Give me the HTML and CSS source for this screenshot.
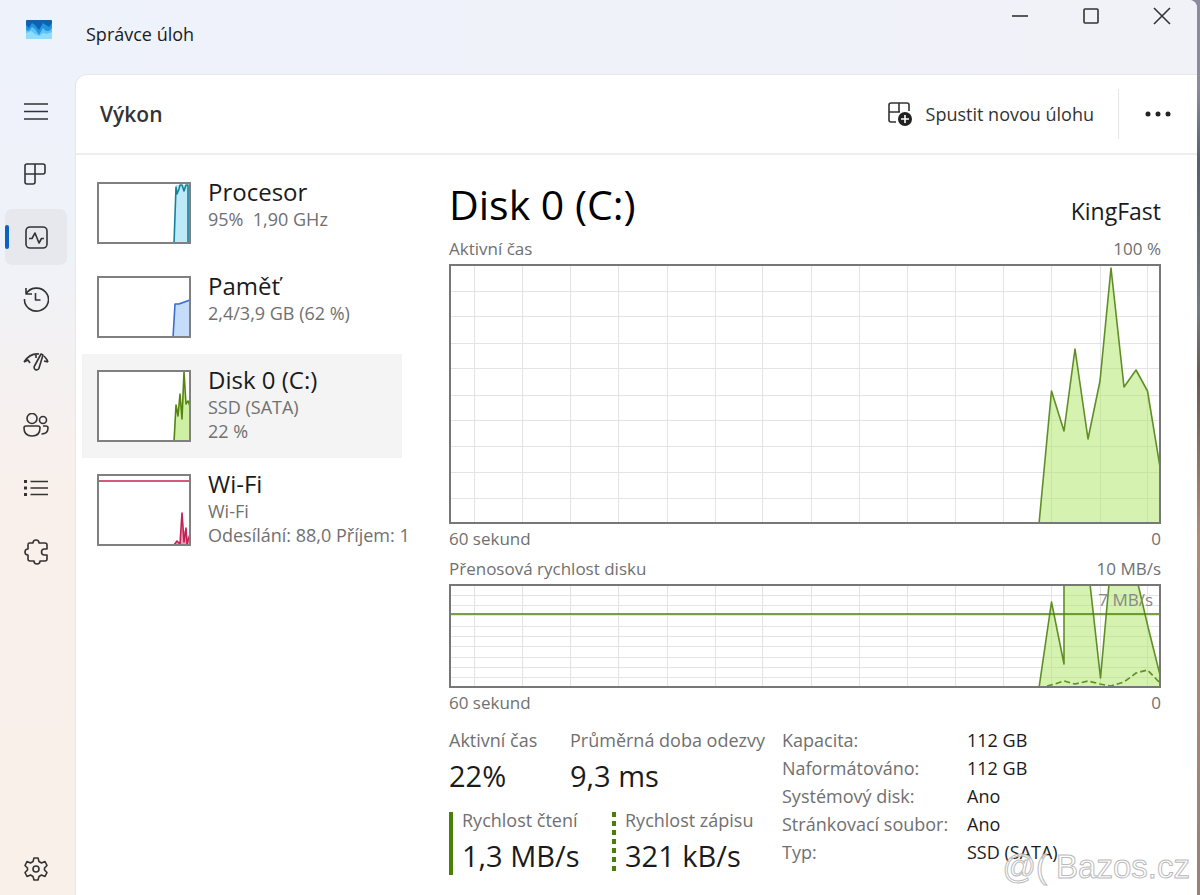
FILE: index.html
```html
<!DOCTYPE html>
<html lang="cs">
<head>
    <meta charset="UTF-8">
    <meta name="viewport" content="width=device-width, initial-scale=1.0">
    <title>Správce úloh</title>
    <link rel="stylesheet" href="styles.css">
</head>
<body>
    <div class="window">
        <header class="titlebar">
            <svg class="app-icon" viewBox="0 0 26 19">
                <rect width="26" height="19" rx="1" fill="#0f62ad"/>
                <path d="M0 5 L3 8 L6 3 L9 5 L13 10 L17 3 L20 5 L23 7 L26 3 V19 H0 Z" fill="#2496e0"/>
                <path d="M0 10 L3 11 L6 7 L9 9 L13 15 L17 8 L20 11 L23 11 L26 8 V19 H0 Z" fill="#5cc4f7"/>
                <path d="M0 13 L5 11 L9 14 L13 16 L17 13 L21 14 L26 12 V19 H0 Z" fill="#8fdcff"/>
            </svg>
            <span class="app-title">Správce úloh</span>
            <div class="window-controls">
                <button type="button" aria-label="Minimalizovat">
                    <svg viewBox="0 0 18 18"><path d="M1 9 H17"/></svg>
                </button>
                <button type="button" aria-label="Maximalizovat">
                    <svg viewBox="0 0 18 18"><rect x="2" y="2" width="14" height="14" rx="1"/></svg>
                </button>
                <button type="button" aria-label="Zavřít">
                    <svg viewBox="0 0 18 18"><path d="M1 1 L17 17 M17 1 L1 17"/></svg>
                </button>
            </div>
        </header>

        <nav class="rail">
            <button type="button" aria-label="Navigace">
                <svg viewBox="0 0 26 26"><path d="M1 6 H25 M1 13.500 H25 M1 21 H25"/></svg>
            </button>
            <button type="button" aria-label="Procesy">
                <svg viewBox="0 0 26 26"><path d="M4 3 H20 Q22 3 22 5 V11 Q22 13 20 13 H2 V5 Q2 3 4 3 Z M12 3 V21 Q12 23 10 23 H4 Q2 23 2 21 V13"/></svg>
            </button>
            <button type="button" class="active" aria-label="Výkon">
                <svg viewBox="0 0 26 26"><rect x="3" y="3" width="21" height="21" rx="4"/><path d="M6 14.500 H9 L12 9 L16 19 L18.500 14.500 H21"/></svg>
            </button>
            <button type="button" aria-label="Historie aplikací">
                <svg viewBox="0 0 26 26"><path d="M3 1 V7 H9 M3 7 A12 11.500 0 1 1 1.500 12 M12.500 6 V13 H17.500"/></svg>
            </button>
            <button type="button" aria-label="Aplikace po spuštění">
                <svg viewBox="0 0 26 26"><path d="M1 12 Q7 3 16 4 M21 6 Q24 9 25 12 M1 12 L5 10 L7 13 M13 4 V8 M25 12 L21 11 M18 4 L11.500 16 A2.500 2.500 0 1 0 16 18 L20 5 Z"/></svg>
            </button>
            <button type="button" aria-label="Uživatelé">
                <svg viewBox="0 0 26 26"><circle cx="9" cy="5.500" r="5"/><circle cx="20" cy="7" r="3.500"/><path d="M3 13 H15 Q17 13 17 15 Q17 23 9 23 Q1 23 1 15 Q1 13 3 13 Z M20 13 H23 Q25 13 25 15 Q25 21 18.500 21"/></svg>
            </button>
            <button type="button" aria-label="Podrobnosti">
                <svg viewBox="0 0 26 26"><path d="M7.500 5.500 H25 M7.500 12 H25 M7.500 18.500 H25"/><path d="M1 5.500 H4 M1 12 H4 M1 18.500 H4" stroke-width="3"/></svg>
            </button>
            <button type="button" aria-label="Služby">
                <svg viewBox="0 0 26 26"><path d="M6 4 H10 A3 3 0 0 1 16 4 H22 Q24 4 24 6 V10 H21.500 A3 3 0 0 0 21.500 16 H24 V20 Q24 22 22 22 H17 A3 3 0 0 1 11 22 H7 Q5 22 5 20 V16 A3 3 0 0 1 5 10 V6 Q5 4 6 4 Z"/></svg>
            </button>
            <button type="button" class="settings" aria-label="Nastavení">
                <svg viewBox="0 0 26 26"><path d="M11 2 H15 L16 5.500 L18.500 7 L22 5.500 L24 9.500 L21.500 12 V14 L24 16.500 L22 20.500 L18.500 19 L16 20.500 L15 24 H11 L10 20.500 L7.500 19 L4 20.500 L2 16.500 L4.500 14 V12 L2 9.500 L4 5.500 L7.500 7 L10 5.500 Z"/><circle cx="13" cy="13" r="3"/></svg>
            </button>
        </nav>

        <main class="page">
            <div class="toolbar">
                <h1>Výkon</h1>
                <button type="button" class="run-task">
                    <svg viewBox="0 0 26 26"><path d="M4 2 H20 Q22 2 22 4 V10 M12 2 V11 M2 11 H13 M9 21 H4 Q2 21 2 19 V4 Q2 2 4 2"/><circle class="dot" cx="18" cy="18" r="7"/><path class="plus" d="M14 18 H22 M18 14 V22"/></svg>
                    Spustit novou úlohu
                </button>
                <button type="button" class="more" aria-label="Další možnosti">
                    <svg viewBox="0 0 26 26"><circle cx="3" cy="13" r="2.500"/><circle cx="13" cy="13" r="2.500"/><circle cx="23" cy="13" r="2.500"/></svg>
                </button>
            </div>

            <div class="content">
                <div class="devices">
                    <button type="button" class="device">
                        <svg class="thumb cpu" viewBox="2 2 90 58">
                            <path class="fill" d="M77 62 L79 3 H92 V62 Z"/>
                            <path class="line" d="M77 62 L79 5 L80 12 L82 7 L83 3 H85 L87 9 L89 3 H91 V62"/>
                        </svg>
                        <span class="device-text">
                            <span class="device-name">Procesor</span>
                            <span>95%&nbsp; 1,90 GHz</span>
                        </span>
                    </button>
                    <button type="button" class="device">
                        <svg class="thumb memory" viewBox="2 2 90 58">
                            <path class="fill" d="M76 62 L78 28 L93 24 V62 Z"/>
                            <path class="line" d="M76 62 L78 28 L82 28 L93 24"/>
                        </svg>
                        <span class="device-text">
                            <span class="device-name">Paměť</span>
                            <span>2,4/3,9 GB (62 %)</span>
                        </span>
                    </button>
                    <button type="button" class="device selected">
                        <svg class="thumb disk tall" viewBox="2 2 90 68">
                            <path class="fill" d="M77 72 L79 35 L81 46 L83 24 L85 49 L87 2 L89 34 L92 34 L93 72 Z"/>
                            <path class="line" d="M77 72 L79 35 L81 46 L83 24 L85 49 L87 2 L89 34 L91 31 L93 36"/>
                        </svg>
                        <span class="device-text">
                            <span class="device-name">Disk 0 (C:)</span>
                            <span>SSD (SATA)</span>
                            <span>22 %</span>
                        </span>
                    </button>
                    <button type="button" class="device">
                        <svg class="thumb wifi tall" viewBox="2 2 90 68">
                            <path class="line" d="M0 7 H94"/>
                            <path class="fill" d="M77 72 L80 67 L83 69 L85 39 L87 58 L89 54 L91 68 L93 62 V72 Z"/>
                            <path class="line" d="M77 71 L80 67 L83 70 L85 39 L87 68 L89 54 L90 70 L93 60"/>
                        </svg>
                        <span class="device-text">
                            <span class="device-name">Wi-Fi</span>
                            <span>Wi-Fi</span>
                            <span>Odesílání: 88,0 Příjem: 1</span>
                        </span>
                    </button>
                </div>

                <section class="detail">
                    <div class="detail-head">
                        <h2>Disk 0 (C:)</h2>
                        <span class="model">KingFast</span>
                    </div>

                    <div class="scale"><span>Aktivní čas</span><span>100 %</span></div>
                    <svg class="graph active-time" viewBox="0 0 708 256" preserveAspectRatio="none">
                        <path class="grid" d="M23.500 0 V258 M71.500 0 V258 M119.500 0 V258 M167.500 0 V258 M216.500 0 V258 M264.500 0 V258 M311.500 0 V258 M360.500 0 V258 M408.500 0 V258 M456.500 0 V258 M504.500 0 V258 M552.500 0 V258 M600.500 0 V258 M649.500 0 V258 M696.500 0 V258"/>
                        <path class="grid" d="M0 25.500 H710 M0 50.500 H710 M0 77.500 H710 M0 102.500 H710 M0 129.500 H710 M0 154.500 H710 M0 180.500 H710 M0 206.500 H710 M0 232.500 H710"/>
                        <path class="fill" d="M588 258 L600.500 125 L613 165 L624 83 L637 173 L649 115 L660 2 L673 121 L685 104 L696.500 125 L709 201 V258 Z"/>
                        <path class="line" d="M588 258 L600.500 125 L613 165 L624 83 L637 173 L649 115 L660 2 L673 121 L685 104 L696.500 125 L709 201"/>
                    </svg>
                    <div class="scale"><span>60 sekund</span><span>0</span></div>

                    <div class="scale"><span>Přenosová rychlost disku</span><span>10 MB/s</span></div>
                    <div class="graph-wrap">
                        <svg class="graph transfer" viewBox="0 0 708 100" preserveAspectRatio="none">
                            <path class="grid" d="M23.500 0 V102 M71.500 0 V102 M119.500 0 V102 M167.500 0 V102 M216.500 0 V102 M264.500 0 V102 M311.500 0 V102 M360.500 0 V102 M408.500 0 V102 M456.500 0 V102 M504.500 0 V102 M552.500 0 V102 M600.500 0 V102 M649.500 0 V102 M696.500 0 V102"/>
                            <path class="grid" d="M0 9.500 H710 M0 19.500 H710 M0 29.500 H710 M0 40.500 H710 M0 50.500 H710 M0 60.500 H710 M0 71.500 H710 M0 81.500 H710 M0 91.500 H710"/>
                            <path class="fill" d="M588 102 L600.500 16 L613 78 V-2 H639 L649.500 92 L658 -2 H687 L709 89 V102 Z"/>
                            <path class="line" d="M588 102 L600.500 16 L613 78 V-2 H639 L649.500 92 L658 -2 H687 L697 41 L709 89"/>
                            <path class="line dashed" d="M596 100 L604 98 L613 95 L624 98 L637 95 L649 98 L660 100 L673 96 L685 87 L696.500 84 L709 97"/>
                            <path class="line limit" d="M0 28 H710"/>
                        </svg>
                        <span class="limit-label">7 MB/s</span>
                    </div>
                    <div class="scale"><span>60 sekund</span><span>0</span></div>

                    <div class="stats">
                        <div class="counters">
                            <div class="counter">
                                <span class="label">Aktivní čas</span>
                                <span class="value">22%</span>
                            </div>
                            <div class="counter">
                                <span class="label">Průměrná doba odezvy</span>
                                <span class="value">9,3 ms</span>
                            </div>
                        </div>
                        <div class="counters speeds">
                            <div class="counter read">
                                <span class="label">Rychlost čtení</span>
                                <span class="value">1,3 MB/s</span>
                            </div>
                            <div class="counter write">
                                <span class="label">Rychlost zápisu</span>
                                <span class="value">321 kB/s</span>
                            </div>
                        </div>
                        <dl class="facts">
                            <dt>Kapacita:</dt><dd>112 GB</dd>
                            <dt>Naformátováno:</dt><dd>112 GB</dd>
                            <dt>Systémový disk:</dt><dd>Ano</dd>
                            <dt>Stránkovací soubor:</dt><dd>Ano</dd>
                            <dt>Typ:</dt><dd>SSD (SATA)</dd>
                        </dl>
                    </div>
                </section>
            </div>
        </main>
    </div>
    <span class="watermark">@( Bazos.cz</span>
</body>
</html>
```
FILE: styles.css
```css
* { box-sizing: border-box; }
body { margin: 0; position: relative; font-family: "Open Sans", "Noto Sans", sans-serif; font-size: 18px; color: #1b1b1b; background: linear-gradient(#8b8c9b 0, #8b8c9b 10%, #55606c 18%, #777c80 35%, #6a5a55 42%, #b08c78 60%, #9a8078 100%); }
h1, h2, dl, dd { margin: 0; font-weight: 400; }
button { font: inherit; color: inherit; background: none; border: none; padding: 0; cursor: pointer; }
svg { display: block; fill: none; stroke: #333; stroke-width: 1.6; stroke-linejoin: round; }

.window { display: grid; grid-template-columns: 75px 1fr; grid-template-rows: 74px 1fr; min-height: 100vh; margin-right: 3px; border-top-right-radius: 8px; background: linear-gradient(#eef2fb 0, #eff2f9 28%, #f4f1f2 40%, #f9f0eb 55%, #f9f0ea 100%); }

/* title bar */
.titlebar { grid-column: 1 / 3; display: flex; align-items: flex-start; padding-left: 26px; background: linear-gradient(90deg, #eef2fb, #f1f2f8); border-top-right-radius: 8px; }
.app-icon { width: 26px; height: 19px; margin-top: 20px; stroke: none; }
.app-title { margin: 22px 0 0 34px; line-height: 24px; }
.window-controls { display: flex; margin-left: auto; }
.window-controls button { width: 71px; height: 32px; display: grid; place-items: center; }
.window-controls svg { width: 18px; height: 18px; }

/* left rail */
.rail { display: flex; flex-direction: column; gap: 7px; padding: 9px 8px 0 5px; }
.rail button { position: relative; height: 56px; border-radius: 7px; display: grid; place-items: center; }
.rail svg { width: 26px; height: 26px; }
.rail .active { background: #e7e8ee; }
.rail .active::before { content: ""; position: absolute; left: 0; top: 16px; width: 4px; height: 24px; border-radius: 2px; background: #0a63bd; }
.rail .settings { margin-top: auto; height: 52px; }

/* page */
.page { background: #fff; border: 1px solid #e6e6ec; border-width: 1px 0 0 1px; border-top-left-radius: 12px; }
.toolbar { display: flex; align-items: center; height: 80px; padding-left: 24px; border-bottom: 2px solid #eee; }
.toolbar h1 { font-size: 21px; font-weight: 600; color: #333; }
.run-task { display: flex; align-items: center; gap: 13px; margin-left: auto; padding-right: 24px; color: #333; }
.run-task svg { width: 26px; height: 26px; }
.run-task .dot { fill: #222; stroke: none; }
.run-task .plus { stroke: #fff; }
.more { width: 79px; height: 50px; border-left: 1px solid #e5e5e5; display: grid; place-items: center; }
.more svg { width: 26px; height: 26px; fill: #222; stroke: none; }
.content { display: grid; grid-template-columns: 320px 1fr; gap: 47px; padding: 11px 36px 16px 6px; }

/* device list */
.device { display: flex; align-items: flex-start; gap: 17px; width: 100%; padding: 13px 15px; text-align: left; }
.device.selected { background: #f4f4f4; }
.thumb { flex: none; width: 94px; height: 62px; margin: 3px 0; border: 2px solid #808080; background: #fff; }
.thumb.tall { height: 72px; }
.device-text { display: flex; flex-direction: column; white-space: nowrap; line-height: 24px; color: #707070; }
.device-name { margin-bottom: 2px; font-size: 24px; line-height: 26px; color: #1b1b1b; }
.cpu .fill { fill: #bdeaf7; stroke: none; }
.cpu .line { stroke: #1a7f9b; }
.memory .fill { fill: #c6dcfb; stroke: none; }
.memory .line { stroke: #3a6fd0; }
.disk .fill { fill: #cdf0a5; stroke: none; }
.disk .line { stroke: #55850f; }
.wifi .fill { fill: #ee9db8; stroke: none; }
.wifi .line { stroke: #c42254; }

/* detail */
.detail { padding-top: 10px; }
.detail-head { display: flex; justify-content: space-between; align-items: baseline; height: 58px; line-height: 56px; }
.detail-head h2 { font-size: 41px; color: #000; }
.model { font-size: 23px; }
.scale { display: flex; justify-content: space-between; font-size: 17px; line-height: 30px; color: #707070; }
.graph { width: 100%; border: 2px solid #777; }
.graph path { vector-effect: non-scaling-stroke; }
.active-time { height: 260px; }
.transfer { height: 104px; }
.graph .grid { stroke: #e4e4e4; stroke-width: 1; }
.graph .fill { fill: #a8e45c; fill-opacity: .48; stroke: none; }
.graph .line { stroke: #5f8f24; }
.graph .dashed { stroke-dasharray: 6 3; }
.graph .limit { stroke: #4a8008; }
.graph-wrap { position: relative; }
.limit-label { position: absolute; top: 2px; right: 8px; font-size: 17px; line-height: 28px; color: #888; }

.stats { display: grid; grid-template-columns: 333px 1fr; row-gap: 8px; padding-top: 8px; color: #707070; line-height: 28px; white-space: nowrap; }
.counters { display: grid; grid-template-columns: 121px 1fr; height: 72px; }
.speeds { grid-template-columns: 163px 1fr; }
.counter { position: relative; display: flex; flex-direction: column; }
.value { font-size: 29px; line-height: 44px; color: #1b1b1b; }
.speeds .counter { padding-left: 13px; }
.speeds .counter::before { content: ""; position: absolute; left: 0; top: 6px; bottom: 3px; width: 4px; background: #4a8008; }
.speeds .write::before { background: repeating-linear-gradient(#4a8008 0, #4a8008 5px, transparent 5px, transparent 9px); }
.facts { grid-column: 2; grid-row: 1 / 3; display: grid; grid-template-columns: 185px 1fr; grid-auto-rows: 28px; align-content: start; }
.facts dd { color: #1b1b1b; }

.watermark { position: absolute; right: 10px; bottom: 8px; font-family: "Liberation Sans", sans-serif; font-size: 33px; line-height: 40px; color: rgba(255, 255, 255, .7); -webkit-text-stroke: 1px #bbb; pointer-events: none; }
```
